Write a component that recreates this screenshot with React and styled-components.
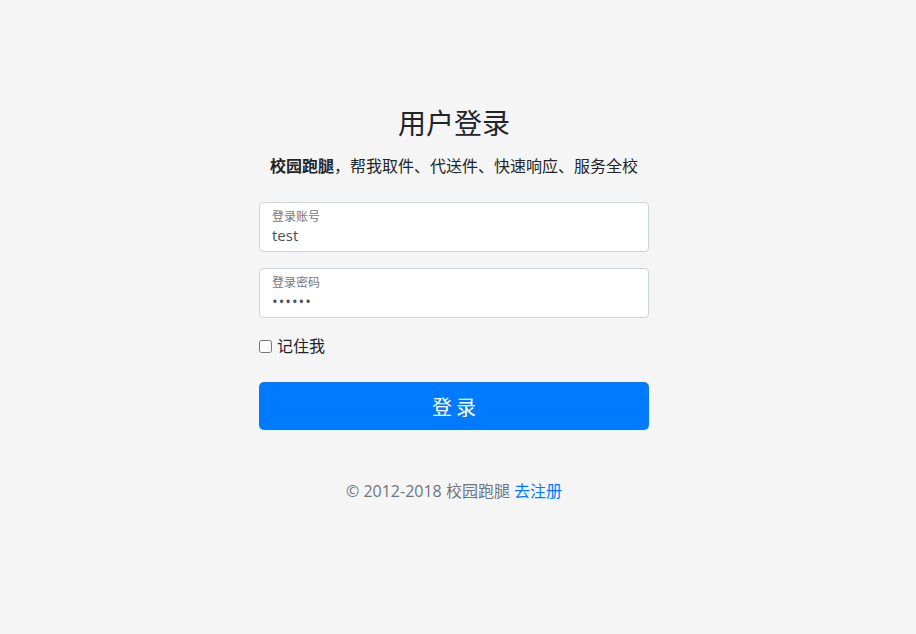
import React, { useState } from "react";
import styled, { createGlobalStyle } from "styled-components";

const GlobalStyle = createGlobalStyle`
  html, body {
    margin: 0;
    padding: 0;
    background: #f5f5f5;
  }
  body {
    font-family: "Open Sans", "Noto Sans CJK SC", sans-serif;
    color: #212529;
  }
`;

const Page = styled.div`
  min-height: 634px;
  padding: 106px 8px 0 0;
  box-sizing: border-box;
  display: flex;
  justify-content: center;
`;

const Form = styled.form`
  width: 390px;
  display: flex;
  flex-direction: column;
`;

const Header = styled.div`
  text-align: center;
  margin-bottom: 24px;
`;

const Title = styled.h3`
  margin: 0 0 14px;
  font-size: 28px;
  line-height: 34px;
  font-weight: 400;
  color: #212529;
`;

const Subtitle = styled.p`
  margin: 0;
  font-size: 16px;
  line-height: 24px;
  b {
    font-weight: 700;
  }
`;

const Field = styled.label`
  display: flex;
  flex-direction: column;
  height: 50px;
  box-sizing: border-box;
  background: #fff;
  border: 1px solid #ced4da;
  border-radius: 4px;
  padding: 6px 12px 0;
  margin-bottom: 16px;
`;

const FieldLabel = styled.span`
  font-size: 12px;
  line-height: 16px;
  color: #777;
`;

const FieldInput = styled.input`
  border: none;
  outline: none;
  padding: 0;
  background: transparent;
  font-family: "Open Sans", "Noto Sans CJK SC", sans-serif;
  font-size: 15px;
  line-height: 20px;
  color: #495057;
  letter-spacing: ${(p) => (p.type === "password" ? "1px" : "0")};
`;

const CheckRow = styled.label`
  display: flex;
  align-items: center;
  gap: 5px;
  font-size: 16px;
  line-height: 24px;
  margin-bottom: 24px;
  input {
    margin: 0;
    width: 13px;
    height: 13px;
  }
`;

const Button = styled.button`
  height: 48px;
  border: none;
  border-radius: 5px;
  padding: 0 0 0 4px;
  background: #007bff;
  color: #fff;
  font-family: "Open Sans", "Noto Sans CJK SC", sans-serif;
  font-size: 20px;
  letter-spacing: 4px;
  cursor: pointer;
`;

const Footer = styled.p`
  margin: 49px 0 0;
  text-align: center;
  font-size: 16px;
  line-height: 24px;
  color: #6c757d;
  a {
    color: #007bff;
    text-decoration: none;
  }
`;

const App = () => {
  const [account, setAccount] = useState("test");
  const [password, setPassword] = useState("123456");

  return (
    <Page>
      <GlobalStyle />
      <Form onSubmit={(e) => e.preventDefault()}>
        <Header>
          <Title>用户登录</Title>
          <Subtitle>
            <b>校园跑腿</b>，帮我取件、代送件、快速响应、服务全校
          </Subtitle>
        </Header>
        <Field>
          <FieldLabel>登录账号</FieldLabel>
          <FieldInput
            value={account}
            onChange={(e) => setAccount(e.target.value)}
          />
        </Field>
        <Field>
          <FieldLabel>登录密码</FieldLabel>
          <FieldInput
            type="password"
            value={password}
            onChange={(e) => setPassword(e.target.value)}
          />
        </Field>
        <CheckRow>
          <input type="checkbox" />
          记住我
        </CheckRow>
        <Button type="submit">登录</Button>
        <Footer>
          © 2012-2018 校园跑腿 <a href="#">去注册</a>
        </Footer>
      </Form>
    </Page>
  );
};

export default App;
